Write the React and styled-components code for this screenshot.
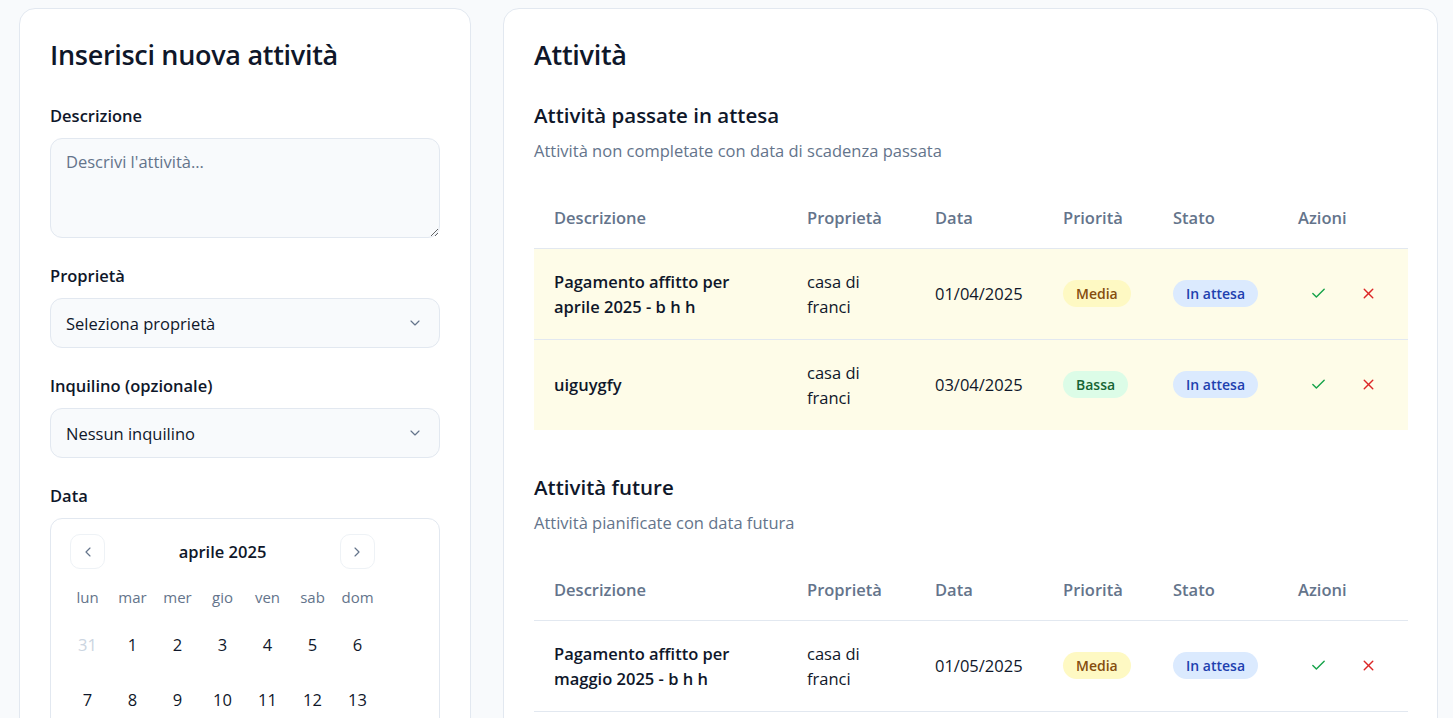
import React from "react";
import styled, { createGlobalStyle } from "styled-components";
import { ChevronDown, ChevronLeft, ChevronRight, Check, X } from "lucide-react";

const GlobalStyle = createGlobalStyle`
  html, body { margin: 0; padding: 0; }
  body {
    background: #f8fafc;
    font-family: "Open Sans", "Noto Sans", sans-serif;
    color: #0f172a;
  }
  * { box-sizing: border-box; }
`;

const Page = styled.div`
  display: grid;
  grid-template-columns: 452px 935px;
  gap: 32px;
  padding: 8px 0 0 19px;
  align-items: start;
`;

const Card = styled.section`
  background: #ffffff;
  border: 1px solid #e2e8f0;
  border-radius: 16px;
  padding: 30px;
`;

const Title = styled.h1`
  margin: 0;
  font-size: 27px;
  line-height: 32px;
  font-weight: 600;
  letter-spacing: -0.3px;
  color: #0f172a;
`;

const Form = styled.div`
  display: flex;
  flex-direction: column;
  gap: 26px;
  margin-top: 33px;
`;

const Field = styled.div`
  display: flex;
  flex-direction: column;
  gap: 10px;
`;

const Label = styled.label`
  font-size: 16.5px;
  line-height: 24px;
  font-weight: 600;
  color: #0f172a;
`;

const TextArea = styled.textarea`
  width: 100%;
  height: 100px;
  border: 1px solid #e2e8f0;
  border-radius: 12px;
  background: #f8fafc;
  padding: 11px 15px;
  font-family: inherit;
  font-size: 16.5px;
  line-height: 24px;
  color: #0f172a;
  resize: vertical;
  outline: none;
  &::placeholder { color: #64748b; }
`;

const SelectBox = styled.div`
  height: 50px;
  border: 1px solid #e2e8f0;
  border-radius: 12px;
  background: #f8fafc;
  padding: 0 16px 0 15px;
  display: flex;
  align-items: center;
  justify-content: space-between;
  font-size: 16.5px;
  color: #0f172a;
  svg { color: #64748b; }
`;

const CalendarBox = styled.div`
  border: 1px solid #e2e8f0;
  border-radius: 12px;
  padding: 15px 14px 20px;
`;

const CalHeader = styled.div`
  width: 315px;
  display: flex;
  align-items: center;
  justify-content: space-between;
  padding: 0 5px;
`;

const NavButton = styled.button`
  width: 35px;
  height: 35px;
  border-radius: 10px;
  border: 1px solid #eef2f6;
  background: #fff;
  display: flex;
  align-items: center;
  justify-content: center;
  padding: 0;
  color: #64748b;
`;

const MonthTitle = styled.div`
  font-size: 16.5px;
  font-weight: 600;
  color: #0f172a;
`;

const CalGrid = styled.div`
  display: grid;
  grid-template-columns: repeat(7, 45px);
  width: 315px;
`;

const WeekDays = styled(CalGrid)`
  margin-top: 17px;
  height: 22px;
  align-items: center;
`;

const WeekDay = styled.div`
  text-align: center;
  font-size: 15px;
  color: #64748b;
`;

const Days = styled(CalGrid)`
  margin-top: 14px;
  row-gap: 10px;
`;

const Day = styled.div`
  height: 45px;
  display: flex;
  align-items: center;
  justify-content: center;
  font-size: 16.5px;
  color: ${(p) => (p.$muted ? "#cbd5e1" : "#0f172a")};
`;

const SectionTitle = styled.h2`
  margin: ${(p) => (p.$first ? "30px" : "43px")} 0 0;
  font-size: 20.5px;
  line-height: 28px;
  font-weight: 600;
  color: #0f172a;
`;

const Subtitle = styled.p`
  margin: 10px 0 0;
  font-size: 16.5px;
  line-height: 24px;
  color: #64748b;
`;

const Table = styled.table`
  width: 100%;
  margin-top: 24px;
  border-collapse: collapse;
  table-layout: fixed;
`;

const Th = styled.th`
  text-align: left;
  height: 61px;
  padding: 0 20px;
  font-size: 16.5px;
  font-weight: 600;
  color: #64748b;
  border-bottom: 1px solid #e2e8f0;
`;

const Tr = styled.tr`
  background: ${(p) => (p.$overdue ? "#fefce8" : "transparent")};
  border-bottom: ${(p) => (p.$last && p.$overdue ? "none" : "1px solid #e2e8f0")};
`;

const Td = styled.td`
  height: 91px;
  padding: 0 20px;
  font-size: 16.5px;
  line-height: 25px;
  color: #0f172a;
  vertical-align: middle;
  font-weight: ${(p) => (p.$bold ? 600 : 400)};
`;

const badgeColors = {
  Media: ["#fef9c3", "#854d0e"],
  Bassa: ["#dcfce7", "#166534"],
  Alta: ["#fee2e2", "#991b1b"],
  "In attesa": ["#dbeafe", "#1e40af"],
};

const Badge = styled.span`
  display: inline-block;
  white-space: nowrap;
  padding: 3px 13px;
  border-radius: 999px;
  font-size: 14px;
  line-height: 21px;
  font-weight: 600;
  background: ${(p) => badgeColors[p.$kind][0]};
  color: ${(p) => badgeColors[p.$kind][1]};
`;

const Actions = styled.div`
  display: flex;
  gap: 10px;
`;

const IconButton = styled.button`
  width: 40px;
  height: 40px;
  border: none;
  background: transparent;
  display: flex;
  align-items: center;
  justify-content: center;
  padding: 0;
  color: ${(p) => (p.$tone === "ok" ? "#16a34a" : "#dc2626")};
`;

const widths = [253, 128, 128, 110, 125, 130];

function TaskTable({ rows, overdue }) {
  return (
    <Table>
      <colgroup>
        {widths.map((w, i) => (
          <col key={i} style={{ width: w }} />
        ))}
      </colgroup>
      <thead>
        <tr>
          <Th>Descrizione</Th>
          <Th>Proprietà</Th>
          <Th>Data</Th>
          <Th>Priorità</Th>
          <Th>Stato</Th>
          <Th>Azioni</Th>
        </tr>
      </thead>
      <tbody>
        {rows.map((r, i) => (
          <Tr key={i} $overdue={overdue} $last={i === rows.length - 1}>
            <Td $bold>{r.desc}</Td>
            <Td>{r.prop}</Td>
            <Td>{r.date}</Td>
            <Td>
              <Badge $kind={r.prio}>{r.prio}</Badge>
            </Td>
            <Td>
              <Badge $kind="In attesa">In attesa</Badge>
            </Td>
            <Td>
              <Actions>
                <IconButton $tone="ok" aria-label="Completa">
                  <Check size={17} strokeWidth={2} />
                </IconButton>
                <IconButton $tone="del" aria-label="Elimina">
                  <X size={17} strokeWidth={2} />
                </IconButton>
              </Actions>
            </Td>
          </Tr>
        ))}
      </tbody>
    </Table>
  );
}

const past = [
  { desc: "Pagamento affitto per aprile 2025 - b h h", prop: "casa di franci", date: "01/04/2025", prio: "Media" },
  { desc: "uiguygfy", prop: "casa di franci", date: "03/04/2025", prio: "Bassa" },
];

const future = [
  { desc: "Pagamento affitto per maggio 2025 - b h h", prop: "casa di franci", date: "01/05/2025", prio: "Media" },
];

const weekDays = ["lun", "mar", "mer", "gio", "ven", "sab", "dom"];
const days = [
  { d: 31, m: true },
  ...Array.from({ length: 30 }, (_, i) => ({ d: i + 1 })),
  ...Array.from({ length: 4 }, (_, i) => ({ d: i + 1, m: true })),
];

export default function App() {
  return (
    <>
      <GlobalStyle />
      <Page>
        <Card>
          <Title>Inserisci nuova attività</Title>
          <Form>
            <Field>
              <Label>Descrizione</Label>
              <TextArea placeholder="Descrivi l'attività..." />
            </Field>
            <Field>
              <Label>Proprietà</Label>
              <SelectBox>
                <span>Seleziona proprietà</span>
                <ChevronDown size={16} strokeWidth={1.75} />
              </SelectBox>
            </Field>
            <Field>
              <Label>Inquilino (opzionale)</Label>
              <SelectBox>
                <span>Nessun inquilino</span>
                <ChevronDown size={16} strokeWidth={1.75} />
              </SelectBox>
            </Field>
            <Field>
              <Label>Data</Label>
              <CalendarBox>
                <CalHeader>
                  <NavButton aria-label="Mese precedente">
                    <ChevronLeft size={16} strokeWidth={1.75} />
                  </NavButton>
                  <MonthTitle>aprile 2025</MonthTitle>
                  <NavButton aria-label="Mese successivo">
                    <ChevronRight size={16} strokeWidth={1.75} />
                  </NavButton>
                </CalHeader>
                <WeekDays>
                  {weekDays.map((w) => (
                    <WeekDay key={w}>{w}</WeekDay>
                  ))}
                </WeekDays>
                <Days>
                  {days.map((x, i) => (
                    <Day key={i} $muted={x.m}>
                      {x.d}
                    </Day>
                  ))}
                </Days>
              </CalendarBox>
            </Field>
          </Form>
        </Card>
        <Card>
          <Title>Attività</Title>
          <SectionTitle $first>Attività passate in attesa</SectionTitle>
          <Subtitle>Attività non completate con data di scadenza passata</Subtitle>
          <TaskTable rows={past} overdue />
          <SectionTitle>Attività future</SectionTitle>
          <Subtitle>Attività pianificate con data futura</Subtitle>
          <TaskTable rows={future} />
        </Card>
      </Page>
    </>
  );
}
